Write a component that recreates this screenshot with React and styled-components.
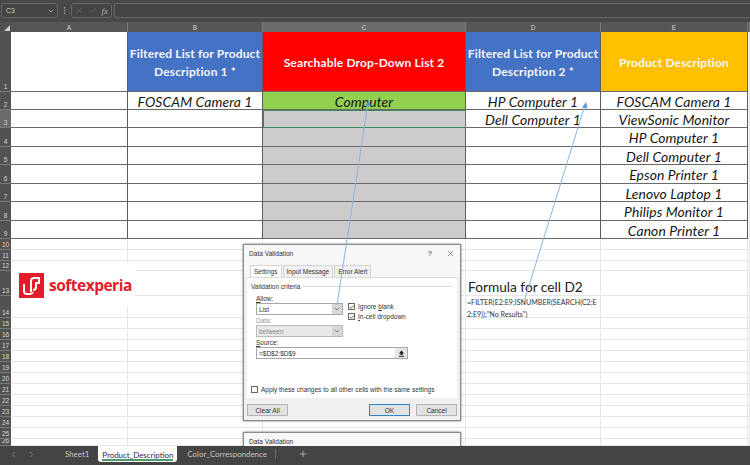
import React from "react";
import styled, { createGlobalStyle } from "styled-components";
import { Check, ChevronDown, ChevronLeft, ChevronRight, MoreVertical, Plus, X } from "lucide-react";

const Global = createGlobalStyle`
  html, body { margin: 0; padding: 0; background: #fff; }
  * { box-sizing: border-box; }
`;

const Page = styled.div`
  width: 750px;
  height: 465px;
  display: flex;
  flex-direction: column;
  overflow: hidden;
  font-family: "Lato", "Liberation Sans", sans-serif;
`;

// formula bar
const FormulaBar = styled.div`
  height: 22px;
  flex: none;
  background: #484848;
  display: flex;
  align-items: center;
  gap: 2px;
  padding: 0 0 1px 1px;
`;
const NameBox = styled.div`
  width: 57px;
  height: 15px;
  border: 1px solid #666;
  border-radius: 3px;
  background: #444;
  color: #c9c9c9;
  font: 7px "Liberation Sans", sans-serif;
  display: flex;
  align-items: center;
  justify-content: space-between;
  padding: 0 2px 0 4px;
`;
const FxBox = styled.div`
  width: 41px;
  height: 15px;
  border: 1px solid #666;
  border-radius: 3px;
  background: #444;
  display: flex;
  align-items: center;
  justify-content: space-around;
  padding: 0 1px;
  color: #7d7d7d;
`;
const Fx = styled.span`
  font: italic 9px "Liberation Serif", serif;
  color: #b5b5b5;
`;
const FormulaInput = styled.div`
  flex: 1;
  height: 15px;
  border: 1px solid #666;
  border-right: none;
  border-radius: 3px 0 0 3px;
  background: #444;
`;

// sheet grid
const Sheet = styled.div`
  position: relative;
  flex: 1;
  display: grid;
  grid-template-columns: 11px 117px 135px 203px 135px 147px 2px;
  grid-template-rows: 10px 60px 18px 18px 19px 18px 19px 18px 19px 18px 11px 11px 10px 25px 22px repeat(11, 11px) 7px;
  background: #fff;
  overflow: hidden;
`;
const Corner = styled.div`
  background: #505050;
  display: flex;
  align-items: flex-end;
  justify-content: flex-end;
  padding: 1px;
  &::after {
    content: "";
    border-style: solid;
    border-width: 0 0 6px 6px;
    border-color: transparent transparent #d0d0d0 transparent;
  }
`;
const ColHead = styled.div`
  background: ${(p) => (p.$active ? "#6a6a6a" : "#565656")};
  border-right: 1px solid #7a7a7a;
  color: #d2d2d2;
  font: 6.5px "Liberation Sans", sans-serif;
  display: flex;
  align-items: center;
  justify-content: center;
`;
const RowHead = styled.div`
  background: ${(p) => (p.$active ? "#6a6a6a" : "#525252")};
  border-bottom: 1px solid #7a7a7a;
  color: #d6d6d6;
  font: 6.5px "Liberation Sans", sans-serif;
  display: flex;
  align-items: flex-end;
  justify-content: center;
  padding-bottom: 1px;
  overflow: hidden;
`;
const Cell = styled.div`
  background: ${(p) => p.$bg || "#fff"};
  border-right: 1px solid ${(p) => (p.$plain ? "#e6e6e6" : "#5c5c5c")};
  border-bottom: 1px solid ${(p) => (p.$plain ? "#e6e6e6" : "#6a6a6a")};
  display: flex;
  align-items: center;
  justify-content: center;
  text-align: center;
  color: #161616;
  font-size: 13.9px;
  font-style: italic;
  letter-spacing: 0.1px;
  white-space: nowrap;
  padding-top: 1px;
`;
const SelectedCell = styled(Cell)`
  border: 1.5px solid #3a8a5e;
`;
const Title = styled.div`
  color: #f4f6fb;
  font-size: 12px;
  font-style: normal;
  font-weight: 700;
  letter-spacing: 0.15px;
  line-height: 17.5px;
  white-space: normal;
  margin-top: 1px;
`;

// floating things over the sheet
const Logo = styled.div`
  position: absolute;
  left: 11px;
  top: 241px;
  width: 124px;
  height: 44px;
  background: #fff;
  display: flex;
  align-items: center;
  gap: 5px;
  padding-left: 8px;
  color: #e31b2b;
  font: 700 15.5px "Open Sans", sans-serif;
  letter-spacing: -0.5px;
`;
const Note = styled.div`
  position: absolute;
  left: 468px;
  top: 256px;
  width: 132px;
  color: #222;
`;
const NoteTitle = styled.div`
  font-size: 13.7px;
  line-height: 17px;
  margin-bottom: 2px;
`;
const NoteFormula = styled.div`
  font-size: 7.1px;
  line-height: 11.5px;
  word-break: break-all;
  color: #333;
  margin-left: -1px;
`;
const Dialog = styled.div`
  position: absolute;
  left: 243px;
  top: ${(p) => p.$top}px;
  width: 218px;
  height: ${(p) => p.$h}px;
  background: #f0f0f0;
  border: 1px solid #8d8d8d;
  box-shadow: 0 0 2px #666;
  font-family: "Liberation Sans", sans-serif;
  font-size: 6.5px;
  color: #333;
  display: flex;
  flex-direction: column;
  padding: 0 3px 4px;
`;
const DialogHead = styled.div`
  height: 17px;
  flex: none;
  display: flex;
  align-items: center;
  justify-content: space-between;
  background: #f7f7f7;
  margin: 0 -3px;
  padding: 0 5px 0 5px;
  font-size: 6.6px;
`;
const HeadActions = styled.div`
  display: flex;
  align-items: center;
  gap: 14px;
  color: #444;
  font-size: 8px;
`;
const Tabs = styled.div`
  display: flex;
  height: 15px;
  flex: none;
  align-items: flex-end;
  background: #f7f7f7;
  margin: 0 -3px;
  padding-left: 6px;
`;
const Tab = styled.div`
  height: 12px;
  display: flex;
  align-items: center;
  padding: 0 3px;
  background: ${(p) => (p.$active ? "#fff" : "#f0f0f0")};
  border: 1px solid #d4d4d4;
  border-bottom: none;
  margin-right: 1px;
`;
const TabPanel = styled.div`
  flex: none;
  height: 121px;
  background: #fff;
  border-top: 1px solid #d9d9d9;
  padding: 4px 4px 0;
  display: flex;
  flex-direction: column;
`;
const Group = styled.div`
  display: flex;
  align-items: center;
  gap: 3px;
  height: 9px;
  &::after {
    content: "";
    flex: 1;
    border-top: 1px solid #dcdcdc;
  }
`;
const Criteria = styled.div`
  display: grid;
  grid-template-columns: 87px 1fr;
  grid-template-rows: 10px 12px 10px 12px;
  column-gap: 5px;
  padding-left: 5px;
  margin-top: 2px;
`;
const Label = styled.div`
  height: 10px;
  display: flex;
  align-items: center;
  color: ${(p) => (p.$muted ? "#999" : "#333")};
  margin-left: ${(p) => p.$indent || 0}px;
  u { text-decoration: underline; }
`;
const Select = styled.div`
  height: 12px;
  width: 87px;
  border: 1px solid ${(p) => (p.$off ? "#bbb" : "#a8a8a8")};
  background: ${(p) => (p.$off ? "#e8e8e8" : "#fff")};
  color: ${(p) => (p.$off ? "#888" : "#333")};
  display: flex;
  align-items: center;
  justify-content: space-between;
  padding-left: 2px;
`;
const SelectArrow = styled.div`
  width: 10px;
  height: 10px;
  background: #d8d8d8;
  color: #555;
  display: flex;
  align-items: center;
  justify-content: center;
`;
const Checks = styled.div`
  grid-row: span 2;
  display: flex;
  flex-direction: column;
  gap: 3px;
  padding-top: 0;
`;
const CheckRow = styled.div`
  display: flex;
  align-items: center;
  gap: 3px;
  height: 7px;
`;
const Box = styled.div`
  width: 7px;
  height: 7px;
  flex: none;
  border: 1px solid #666;
  background: #fff;
  color: #333;
  display: flex;
  align-items: center;
  justify-content: center;
  svg { flex: none; }
`;
const Source = styled.div`
  margin-left: 5px;
  width: 152px;
  height: 12px;
  border: 1px solid #a8a8a8;
  display: flex;
  align-items: center;
  justify-content: space-between;
  padding-left: 2px;
`;
const SourceBtn = styled.div`
  width: 12px;
  height: 10px;
  background: #e6e6e6;
  color: #222;
  display: flex;
  align-items: center;
  justify-content: center;
`;
const ApplyRow = styled(CheckRow)`
  margin-top: 27px;
`;
const Buttons = styled.div`
  display: flex;
  align-items: center;
  margin-top: 6px;
`;
const Btn = styled.div`
  width: 41px;
  height: 12px;
  background: #e2e2e2;
  border: 1px solid ${(p) => (p.$primary ? "#2f86d0" : "#b5b5b5")};
  display: flex;
  align-items: center;
  justify-content: center;
  margin-left: ${(p) => p.$gap || 0}px;
`;
const Arrows = styled.svg`
  position: absolute;
  left: 0;
  top: -22px;
  pointer-events: none;
`;

// sheet tabs
const TabBar = styled.div`
  height: 19px;
  flex: none;
  background: #444;
  display: flex;
  align-items: flex-start;
  color: #c6c6c6;
  font-size: 7.9px;
`;
const Nav = styled.div`
  display: flex;
  gap: 9px;
  padding: 4px 0 0 9px;
  width: 55px;
  color: #8a8a8a;
`;
const SheetTab = styled.div`
  height: ${(p) => (p.$active ? "16px" : "15px")};
  padding: ${(p) => (p.$active ? "1px 4px 0" : "1px 9px 0 10px")};
  display: flex;
  align-items: center;
  position: relative;
  ${(p) => p.$active && "background: #fff; color: #2c2c2c; border-radius: 0 0 3px 3px;"}
  ${(p) => p.$active && "&::after { content: ''; position: absolute; left: 4px; right: 4px; bottom: 1px; height: 2px; background: #4c9a6e; }"}
`;
const Divider = styled.div`
  width: 1px;
  height: 10px;
  margin: 3px 0 0 -1px;
  background: #6a6a6a;
`;
const AddSheet = styled.div`
  margin: 3px 0 0 22px;
  color: #b8b8b8;
  display: flex;
`;

const columns = ["A", "B", "C", "D", "E"];

const tableRows = [
  { n: 2, b: "FOSCAM Camera 1", c: "Computer", d: "HP Computer 1", e: "FOSCAM Camera 1" },
  { n: 3, b: "", c: "", d: "Dell Computer 1", e: "ViewSonic Monitor", selected: true },
  { n: 4, e: "HP Computer 1" },
  { n: 5, e: "Dell Computer 1" },
  { n: 6, e: "Epson Printer 1" },
  { n: 7, e: "Lenovo Laptop 1" },
  { n: 8, e: "Philips Monitor 1" },
  { n: 9, e: "Canon Printer 1" },
];

const plainRows = Array.from({ length: 17 }, (_, i) => i + 10);

function LogoMark() {
  return (
    <svg width="25" height="25" viewBox="0 0 25 25" style={{ flex: "none" }}>
      <rect width="25" height="25" fill="#e31b2b" />
      <path d="M12 19V8a3 3 0 0 1 3-3h5v5h-3v4a3 3 0 0 1-3 3" fill="none" stroke="#fff" strokeWidth="2" />
      <path d="M5 11v7a3 3 0 0 0 3 3h3a3 3 0 0 0 3-2" fill="none" stroke="#fff" strokeWidth="2" />
    </svg>
  );
}

function ValidationDialog() {
  return (
    <Dialog $top={222} $h={177}>
      <DialogHead>
        Data Validation
        <HeadActions>
          ?
          <X size={9} strokeWidth={1.5} />
        </HeadActions>
      </DialogHead>
      <Tabs>
        <Tab $active>Settings</Tab>
        <Tab>Input Message</Tab>
        <Tab>Error Alert</Tab>
      </Tabs>
      <TabPanel>
        <Group>Validation criteria</Group>
        <Criteria>
          <Label><span><u>A</u>llow:</span></Label>
          <span />
          <Select>
            List
            <SelectArrow><ChevronDown size={8} /></SelectArrow>
          </Select>
          <Checks>
            <CheckRow><Box><Check size={6} strokeWidth={3} /></Box><span>Ignore <u>b</u>lank</span></CheckRow>
            <CheckRow><Box><Check size={6} strokeWidth={3} /></Box><span><u>I</u>n-cell dropdown</span></CheckRow>
          </Checks>
          <Label $muted>Data:</Label>
          <Select $off>
            between
            <SelectArrow><ChevronDown size={8} /></SelectArrow>
          </Select>
          <span />
        </Criteria>
        <Label $indent={5}><span><u>S</u>ource:</span></Label>
        <Source>
          =$D$2:$D$9
          <SourceBtn>
            <svg width="7" height="7" viewBox="0 0 7 7">
              <path d="M3.5 0.5L6.2 3.5H4.5V5H2.500V3.500H0.800zM1 5.800H6V6.800H1z" fill="#222" />
            </svg>
          </SourceBtn>
        </Source>
        <ApplyRow><Box />Apply these changes to all other cells with the same settings</ApplyRow>
      </TabPanel>
      <Buttons>
        <Btn>Clear All</Btn>
        <Btn $primary $gap={81}>OK</Btn>
        <Btn $gap={6}>Cancel</Btn>
      </Buttons>
    </Dialog>
  );
}

export default function App() {
  return (
    <Page>
      <Global />
      <FormulaBar>
        <NameBox>C3<ChevronDown size={8} /></NameBox>
        <MoreVertical size={9} color="#aaa" />
        <FxBox>
          <X size={9} strokeWidth={1.3} />
          <Check size={9} strokeWidth={1.3} />
          <Fx>fx</Fx>
        </FxBox>
        <FormulaInput />
      </FormulaBar>

      <Sheet>
        <Corner />
        {columns.map((c) => (
          <ColHead key={c} $active={c === "C"}>{c}</ColHead>
        ))}
        <ColHead />

        <RowHead>1</RowHead>
        <Cell />
        <Cell $bg="#4472c4"><Title>Filtered List for Product Description 1 *</Title></Cell>
        <Cell $bg="#ff0000"><Title>Searchable Drop-Down List 2</Title></Cell>
        <Cell $bg="#4472c4"><Title>Filtered List for Product Description 2 *</Title></Cell>
        <Cell $bg="#ffc000"><Title>Product Description</Title></Cell>
        <Cell $plain />

        {tableRows.map((r) => (
          <React.Fragment key={r.n}>
            <RowHead $active={r.selected}>{r.n}</RowHead>
            <Cell />
            <Cell>{r.b}</Cell>
            {r.selected ? (
              <SelectedCell $bg="#cdcbcb" />
            ) : (
              <Cell $bg={r.n === 2 ? "#92d050" : "#cdcbcb"}>{r.c}</Cell>
            )}
            <Cell>{r.d}</Cell>
            <Cell>{r.e}</Cell>
            <Cell $plain />
          </React.Fragment>
        ))}

        {plainRows.map((n) => (
          <React.Fragment key={n}>
            <RowHead>{n}</RowHead>
            <Cell $plain />
            <Cell $plain />
            <Cell $plain />
            <Cell $plain />
            <Cell $plain />
            <Cell $plain />
          </React.Fragment>
        ))}

        <Logo>
          <LogoMark />
          softexperia
        </Logo>

        <Note>
          <NoteTitle>Formula for cell D2</NoteTitle>
          <NoteFormula>=FILTER(E2:E9;ISNUMBER(SEARCH(C2;E2:E9));"No Results")</NoteFormula>
        </Note>

        <ValidationDialog />
        <Dialog $top={410} $h={60}>
          <DialogHead>Data Validation</DialogHead>
        </Dialog>

        <Arrows width="750" height="465" viewBox="0 0 750 465">
          <g stroke="#8db4e0" strokeWidth="1" fill="none">
            <path d="M337 305L368 103" />
            <path d="M523 305L585 105" />
          </g>
          <path d="M368.500 100L365.500 106L371 106.500z" fill="#5b9bd5" />
          <path d="M586 102L582 107.500L587.500 108.500z" fill="#5b9bd5" />
        </Arrows>
      </Sheet>

      <TabBar>
        <Nav>
          <ChevronLeft size={9} />
          <ChevronRight size={9} />
        </Nav>
        <SheetTab>Sheet1</SheetTab>
        <SheetTab $active>Product_Description</SheetTab>
        <SheetTab>Color_Correspondence</SheetTab>
        <Divider />
        <AddSheet><Plus size={10} /></AddSheet>
      </TabBar>
    </Page>
  );
}
